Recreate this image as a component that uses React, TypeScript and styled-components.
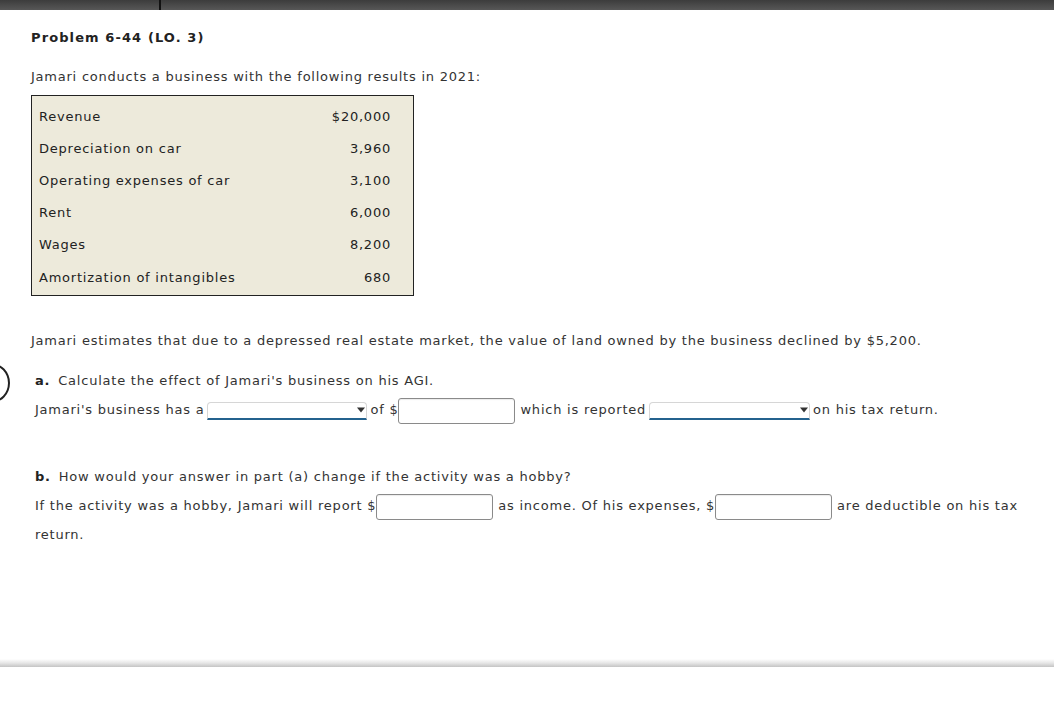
import React from 'react';
import styled, { createGlobalStyle } from 'styled-components';

const GlobalStyle = createGlobalStyle`
  html, body {
    margin: 0;
    padding: 0;
    background: #fff;
  }
  body {
    font-family: "DejaVu Sans", Verdana, sans-serif;
    font-size: 13px;
    letter-spacing: 0.77px;
    color: #333;
  }
`;

const rows = [
  { label: 'Revenue', value: '$20,000' },
  { label: 'Depreciation on car', value: '3,960' },
  { label: 'Operating expenses of car', value: '3,100' },
  { label: 'Rent', value: '6,000' },
  { label: 'Wages', value: '8,200' },
  { label: 'Amortization of intangibles', value: '680' },
];

const Page = styled.div`
  position: relative;
  width: 1054px;
  height: 701px;
  overflow: hidden;
`;

const TopBar = styled.div`
  height: 10px;
  background: linear-gradient(#3c3c3c, #575757);
  display: flex;
`;

const TopTab = styled.div`
  width: 159px;
  border-right: 2px solid #111;
`;

const Content = styled.div`
  padding: 19px 0 0 31px;
`;

const Title = styled.h2`
  margin: 0;
  font-size: 13px;
  font-weight: bold;
  letter-spacing: 1.1px;
  color: #222;
  line-height: 17px;
`;

const Para = styled.p`
  margin: 0;
  line-height: 17px;
`;

const Intro = styled(Para)`
  margin-top: 22px;
`;

const DataTable = styled.div`
  margin-top: 10px;
  width: 352px;
  padding: 4px 22px 2px 7px;
  background: #edeadb;
  border: 1px solid #222;
  display: grid;
  grid-template-columns: 1fr auto;
  grid-auto-rows: 32.2px;
  align-items: center;
  color: #222;
`;

const Cell = styled.div<{ $right?: boolean }>`
  text-align: ${(p) => (p.$right ? 'right' : 'left')};
`;

const Estimate = styled(Para)`
  margin-top: 36px;
`;

const Part = styled.div<{ $top: number }>`
  margin-top: ${(p) => p.$top}px;
  padding-left: 4px;
`;

const Question = styled.div`
  line-height: 17px;
  margin-bottom: 6px;
`;

const Letter = styled.b`
  color: #222;
  margin-right: 8px;
`;

const AnswerLine = styled.div`
  line-height: 29px;
  width: 990px;
`;

const SelectBox = styled.span<{ $w: number }>`
  display: inline-block;
  position: relative;
  vertical-align: middle;
  width: ${(p) => p.$w}px;
  height: 18px;
  margin: 0 3px 0 3px;
  background: #fff;
  border: 1px solid #d6d6d6;
  border-bottom: 2px solid #24628e;
  border-radius: 4px 4px 0 0;
  box-sizing: border-box;
`;

const Caret = styled.svg`
  position: absolute;
  right: 1px;
  top: 4px;
`;

const NumInput = styled.span<{ $w: number }>`
  display: inline-block;
  vertical-align: middle;
  width: ${(p) => p.$w}px;
  height: 26px;
  margin: 0 5px 0 0;
  background: #fff;
  border: 1px solid #8a8a8a;
  border-radius: 3px;
  box-sizing: border-box;
  box-shadow: inset 0 1px 1px rgba(0, 0, 0, 0.08);
`;

const Ring = styled.div`
  position: absolute;
  left: -28px;
  top: 363px;
  width: 34px;
  height: 36px;
  border: 2px solid #222;
  border-radius: 50%;
`;

const BottomRule = styled.div`
  position: absolute;
  left: 0;
  right: 0;
  top: 659px;
  height: 8px;
  background: linear-gradient(#ffffff, #e6e6e6 50%, #c4c4c4);
`;

function Select({ width }: { width: number }) {
  return (
    <SelectBox $w={width}>
      <Caret width="8" height="6" viewBox="0 0 8 6">
        <path d="M0 0.5 H8 L4 5.5 Z" fill="#333" />
      </Caret>
    </SelectBox>
  );
}

export default function App() {
  return (
    <Page>
      <GlobalStyle />
      <TopBar>
        <TopTab />
      </TopBar>
      <Ring />
      <Content>
        <Title>Problem 6-44 (LO. 3)</Title>
        <Intro>Jamari conducts a business with the following results in 2021:</Intro>
        <DataTable>
          {rows.map((r) => (
            <React.Fragment key={r.label}>
              <Cell>{r.label}</Cell>
              <Cell $right>{r.value}</Cell>
            </React.Fragment>
          ))}
        </DataTable>
        <Estimate>
          Jamari estimates that due to a depressed real estate market, the value of land owned by the
          business declined by $5,200.
        </Estimate>

        <Part $top={23}>
          <Question>
            <Letter>a.</Letter>Calculate the effect of Jamari's business on his AGI.
          </Question>
          <AnswerLine>
            Jamari's business has a<Select width={160} />of $<NumInput $w={117} />which is
            reported<Select width={161} />on his tax return.
          </AnswerLine>
        </Part>

        <Part $top={44}>
          <Question>
            <Letter>b.</Letter>How would your answer in part (a) change if the activity was a hobby?
          </Question>
          <AnswerLine>
            If the activity was a hobby, Jamari will report $<NumInput $w={117} />as income. Of his
            expenses, $<NumInput $w={117} />are deductible on his tax return.
          </AnswerLine>
        </Part>
      </Content>
      <BottomRule />
    </Page>
  );
}
